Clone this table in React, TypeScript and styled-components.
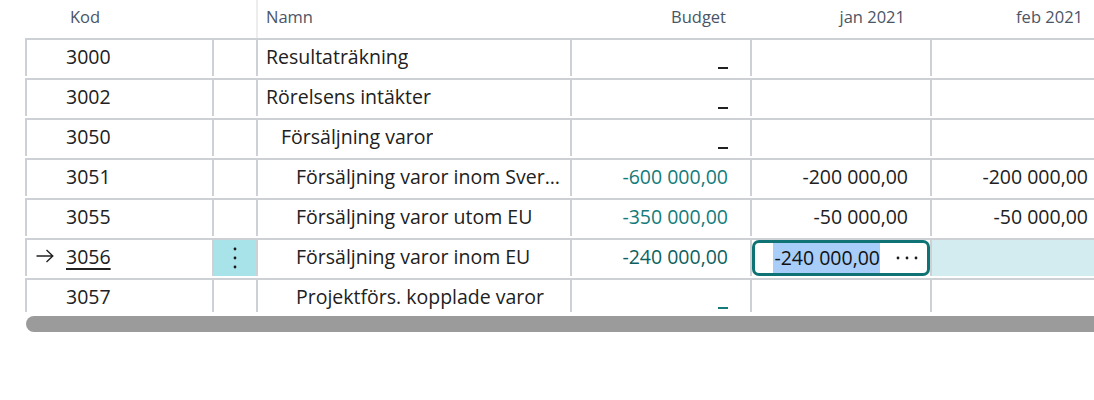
import React from 'react';
import styled, { createGlobalStyle } from 'styled-components';

const GlobalStyle = createGlobalStyle`
  html, body { margin: 0; padding: 0; background: #ffffff; }
  body {
    font-family: "Open Sans", "Noto Sans", sans-serif;
    color: #212121;
    overflow: hidden;
  }
`;

const COLS = '189px 44px 314px 180px 180px 180px';
const LINE = '#cdd0d5';

const Page = styled.div`
  width: 1094px;
  height: 400px;
  overflow: hidden;
`;

const Table = styled.div`
  margin-left: 25px;
  width: 1069px;
  overflow: hidden;
`;

const HeaderRow = styled.div`
  display: grid;
  grid-template-columns: ${COLS};
  height: 38px;
`;

const HeaderCell = styled.div<{ $align?: 'left' | 'right'; $pad?: number; $sep?: boolean }>`
  display: flex;
  align-items: center;
  justify-content: ${(p) => (p.$align === 'right' ? 'flex-end' : 'flex-start')};
  padding-left: ${(p) => (p.$align === 'right' ? 0 : p.$pad ?? 0)}px;
  padding-right: ${(p) => (p.$align === 'right' ? p.$pad ?? 0 : 0)}px;
  padding-bottom: 6px;
  box-sizing: border-box;
  border-right: 2px solid ${(p) => (p.$sep ? '#ededed' : 'transparent')};
  font-size: 16.5px;
  color: #4a5566;
  white-space: nowrap;
`;

const Body = styled.div`
  height: 274px;
  overflow: hidden;
`;

const Row = styled.div`
  display: grid;
  grid-template-columns: ${COLS};
  border-top: 2px solid ${LINE};
  padding-bottom: 2px;
  height: 40px;
  box-sizing: border-box;
`;

const Cell = styled.div<{ $first?: boolean; $bg?: string }>`
  height: 36px;
  box-sizing: border-box;
  padding-bottom: 4px;
  border-right: 2px solid ${LINE};
  border-left: ${(p) => (p.$first ? `2px solid ${LINE}` : 'none')};
  background: ${(p) => p.$bg ?? 'transparent'};
  display: flex;
  align-items: center;
  font-size: 19.5px;
  white-space: nowrap;
  overflow: hidden;
  position: relative;
`;

const KodCell = styled(Cell)`
  padding-left: 39px;
`;

const Arrow = styled.svg`
  position: absolute;
  left: 9px;
  top: 9px;
`;

const KodLink = styled.span<{ $active?: boolean }>`
  text-decoration: ${(p) => (p.$active ? 'underline' : 'none')};
  text-underline-offset: 4px;
  text-decoration-thickness: 1.6px;
`;

const ActionCell = styled(Cell)`
  justify-content: center;
  padding-bottom: 0;
`;

const NameCell = styled(Cell)<{ $level: number }>`
  padding-left: ${(p) => 8 + p.$level * 15}px;
  padding-right: 8px;
`;

const NameText = styled.span`
  overflow: hidden;
  text-overflow: ellipsis;
  white-space: nowrap;
`;

const AmountCell = styled(Cell)<{ $tone?: 'teal' | 'dark' | 'plain' }>`
  justify-content: flex-end;
  padding-right: 22px;
  color: ${(p) => (p.$tone === 'teal' ? '#137b7b' : p.$tone === 'dark' ? '#0e5f60' : '#212121')};
`;

const Blank = styled.span`
  display: inline-block;
  width: 10px;
  height: 2px;
  background: currentColor;
  margin-top: 24px;
`;

const EditCell = styled(Cell)`
  padding: 0;
`;

const EditBox = styled.div`
  flex: 1;
  align-self: stretch;
  border: 3px solid #0f7274;
  border-radius: 7px;
  background: #ffffff;
  display: flex;
  align-items: center;
  justify-content: flex-end;
  padding-right: 9px;
  gap: 16px;
  box-sizing: border-box;
`;

const Selected = styled.span`
  background: #a7cdf8;
  color: #111;
  line-height: 30px;
  padding: 0 0 0 1px;
`;

const Scrollbar = styled.div`
  margin-top: 4px;
  margin-left: 26px;
  height: 16px;
  background: #9b9b9b;
  border-radius: 8px 0 0 8px;
`;

function DotsV() {
  return (
    <svg width="4" height="22" viewBox="0 0 4 22">
      <circle cx="2" cy="2" r="1.4" fill="#1a1a1a" />
      <circle cx="2" cy="11" r="1.4" fill="#1a1a1a" />
      <circle cx="2" cy="20" r="1.4" fill="#1a1a1a" />
    </svg>
  );
}

function DotsH() {
  return (
    <svg width="22" height="4" viewBox="0 0 22 4">
      <circle cx="2" cy="2" r="1.4" fill="#1a1a1a" />
      <circle cx="11" cy="2" r="1.4" fill="#1a1a1a" />
      <circle cx="20" cy="2" r="1.4" fill="#1a1a1a" />
    </svg>
  );
}

type RowData = {
  kod: string;
  name: string;
  level: number;
  budget: string | null;
  budgetTone: 'teal' | 'plain';
  jan: string;
  feb: string;
  active?: boolean;
};

const rows: RowData[] = [
  { kod: '3000', name: 'Resultaträkning', level: 0, budget: null, budgetTone: 'plain', jan: '', feb: '' },
  { kod: '3002', name: 'Rörelsens intäkter', level: 0, budget: null, budgetTone: 'plain', jan: '', feb: '' },
  { kod: '3050', name: 'Försäljning varor', level: 1, budget: null, budgetTone: 'plain', jan: '', feb: '' },
  { kod: '3051', name: 'Försäljning varor inom Sverige', level: 2, budget: '-600 000,00', budgetTone: 'teal', jan: '-200 000,00', feb: '-200 000,00' },
  { kod: '3055', name: 'Försäljning varor utom EU', level: 2, budget: '-350 000,00', budgetTone: 'teal', jan: '-50 000,00', feb: '-50 000,00' },
  { kod: '3056', name: 'Försäljning varor inom EU', level: 2, budget: '-240 000,00', budgetTone: 'teal', jan: '-240 000,00', feb: '', active: true },
  { kod: '3057', name: 'Projektförs. kopplade varor', level: 2, budget: null, budgetTone: 'teal', jan: '', feb: '' },
];

export default function App() {
  return (
    <Page>
      <GlobalStyle />
      <Table>
        <HeaderRow>
          <HeaderCell $pad={45}>Kod</HeaderCell>
          <HeaderCell $sep />
          <HeaderCell $pad={8}>Namn</HeaderCell>
          <HeaderCell $align="right" $pad={24}>Budget</HeaderCell>
          <HeaderCell $align="right" $pad={25}>jan 2021</HeaderCell>
          <HeaderCell $align="right" $pad={27}>feb 2021</HeaderCell>
        </HeaderRow>
        <Body>
          {rows.map((r) => (
            <Row key={r.kod}>
              <KodCell $first>
                {r.active && (
                  <Arrow width="18" height="14" viewBox="0 0 18 14">
                    <path d="M0.5 7 H16.5 M10.5 1 L16.8 7 L10.5 13" fill="none" stroke="#222" strokeWidth="1.4" />
                  </Arrow>
                )}
                <KodLink $active={r.active}>{r.kod}</KodLink>
              </KodCell>
              <ActionCell $bg={r.active ? '#a7e3e9' : undefined}>{r.active && <DotsV />}</ActionCell>
              <NameCell $level={r.level}>
                <NameText>{r.name}</NameText>
              </NameCell>
              <AmountCell $tone={r.active ? 'dark' : r.budgetTone}>
                {r.budget ?? <Blank />}
              </AmountCell>
              {r.active ? (
                <EditCell>
                  <EditBox>
                    <Selected>{r.jan}</Selected>
                    <DotsH />
                  </EditBox>
                </EditCell>
              ) : (
                <AmountCell $tone="plain">{r.jan}</AmountCell>
              )}
              <AmountCell $tone="plain" $bg={r.active ? '#d3ecef' : undefined}>
                {r.feb}
              </AmountCell>
            </Row>
          ))}
        </Body>
      </Table>
      <Scrollbar />
    </Page>
  );
}
